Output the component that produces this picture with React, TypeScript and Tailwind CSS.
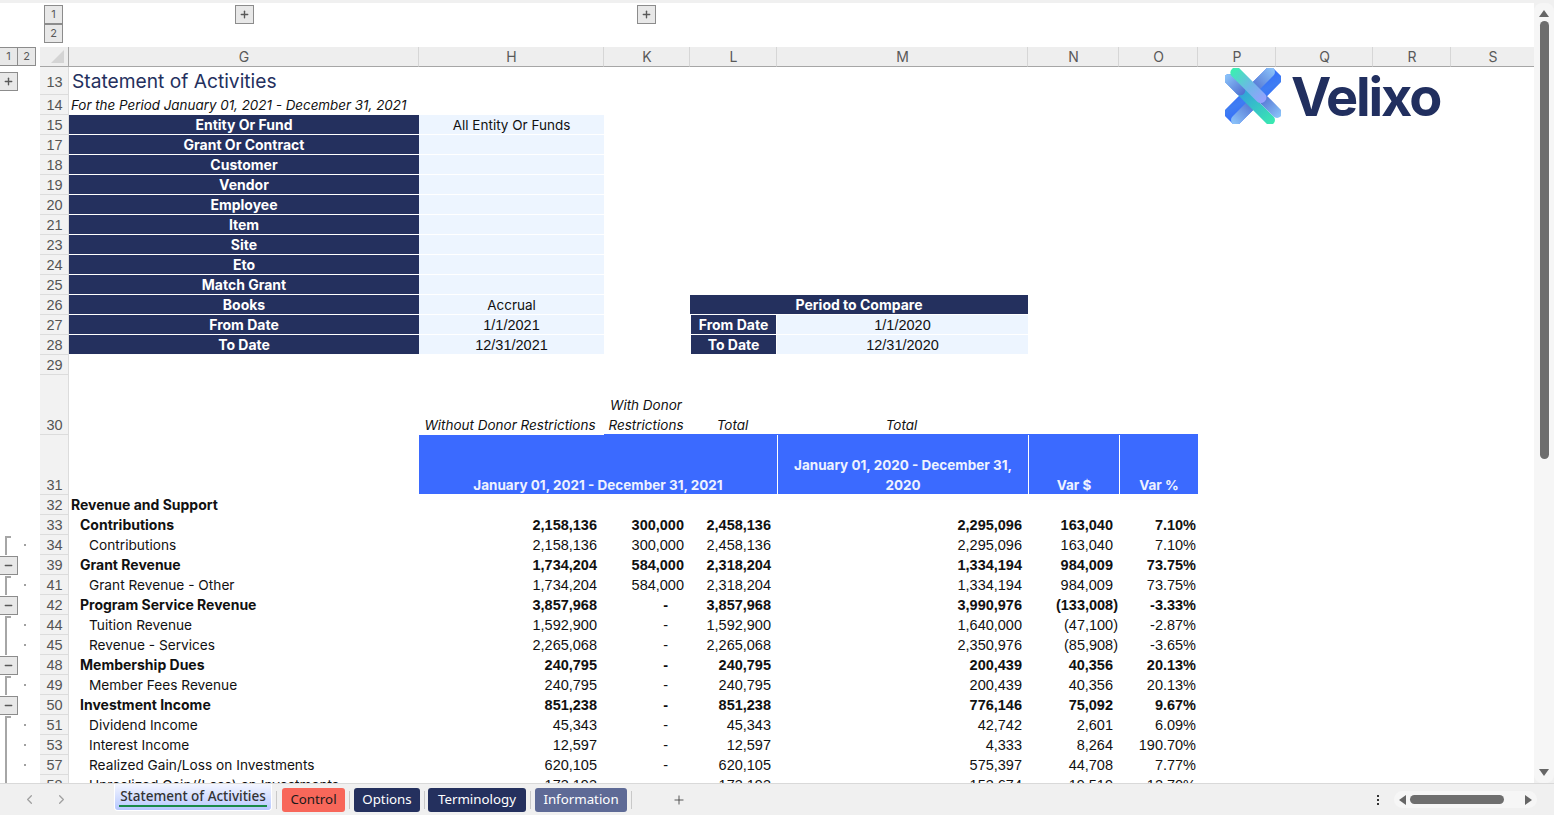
import { ChevronLeft, ChevronRight, Minus, Plus } from 'lucide-react';
import type { ReactNode } from 'react';

const GRID = 'grid grid-cols-[40px_29px_350px_185px_86px_87px_251px_91px_79px_78px_97px_78px_83px]';
const NUMFONT = "font-['Liberation_Sans',sans-serif] text-[14.5px]";

type Gutter = 'plus' | 'minus' | 'hook' | 'line';

function OutlineBtn({ children, className = '' }: { children: ReactNode; className?: string }) {
  return (
    <div className={`flex h-[19px] w-[19px] items-center justify-center border border-[#8c8c8c] bg-[#e8e8e8] text-[11px] text-[#595959] ${className}`}>
      {children}
    </div>
  );
}

function Row({ n, gutter, height = 'h-5', numClass = '', children }: { n: number; gutter?: Gutter; height?: string; numClass?: string; children?: ReactNode }) {
  return (
    <div className={`${GRID} ${height}`}>
      <div className="relative">
        {gutter === 'plus' && <OutlineBtn className="absolute left-[-1px] top-[5px]"><Plus size={11} strokeWidth={3} /></OutlineBtn>}
        {gutter === 'minus' && <OutlineBtn className="absolute left-[-1px] top-px"><Minus size={11} strokeWidth={3} /></OutlineBtn>}
        {gutter === 'hook' && <div className="absolute bottom-0 left-[5px] top-px w-[6px] border-l-2 border-t-2 border-[#a6a6a6]" />}
        {gutter === 'line' && <div className="absolute bottom-0 left-[5px] top-0 w-[2px] bg-[#a6a6a6]" />}
        {(gutter === 'hook' || gutter === 'line') && <div className="absolute left-[24px] top-[9px] h-[2px] w-[2px] bg-[#a0a0a0]" />}
      </div>
      <div className={`flex items-end justify-center bg-[#f2f2f2] leading-[20px] text-[#555555] shadow-[inset_-1px_-1px_0_#dcdcdc] ${NUMFONT} ${numClass}`}>
        {n}
      </div>
      {children}
    </div>
  );
}

function Label({ text, className = '' }: { text: string; className?: string }) {
  return <div className={`flex items-end justify-center border-b border-white bg-[#24305e] text-[14px] font-bold leading-[19px] text-white ${className}`}>{text}</div>;
}

function Value({ text = '', date }: { text?: string; date?: boolean }) {
  return <div className={`flex items-end justify-center bg-[#edf5ff] leading-[20px] text-[#111111] shadow-[inset_0_-1px_0_#ffffff] ${date ? NUMFONT : 'text-[13.5px]'}`}>{text}</div>;
}

const filters: [number, string, string?][] = [
  [15, 'Entity Or Fund', 'All Entity Or Funds'],
  [17, 'Grant Or Contract'],
  [18, 'Customer'],
  [19, 'Vendor'],
  [20, 'Employee'],
  [21, 'Item'],
  [23, 'Site'],
  [24, 'Eto'],
  [25, 'Match Grant'],
];

type DataRow = { n: number; label: string; vals: string[]; level: 1 | 2; gutter?: Gutter };

const data: DataRow[] = [
  { n: 33, label: 'Contributions', level: 1, vals: ['2,158,136', '300,000', '2,458,136', '2,295,096', '163,040', '7.10%'] },
  { n: 34, label: 'Contributions', level: 2, gutter: 'hook', vals: ['2,158,136', '300,000', '2,458,136', '2,295,096', '163,040', '7.10%'] },
  { n: 39, label: 'Grant Revenue', level: 1, gutter: 'minus', vals: ['1,734,204', '584,000', '2,318,204', '1,334,194', '984,009', '73.75%'] },
  { n: 41, label: 'Grant Revenue - Other', level: 2, gutter: 'hook', vals: ['1,734,204', '584,000', '2,318,204', '1,334,194', '984,009', '73.75%'] },
  { n: 42, label: 'Program Service Revenue', level: 1, gutter: 'minus', vals: ['3,857,968', '-', '3,857,968', '3,990,976', '(133,008)', '-3.33%'] },
  { n: 44, label: 'Tuition Revenue', level: 2, gutter: 'hook', vals: ['1,592,900', '-', '1,592,900', '1,640,000', '(47,100)', '-2.87%'] },
  { n: 45, label: 'Revenue - Services', level: 2, gutter: 'line', vals: ['2,265,068', '-', '2,265,068', '2,350,976', '(85,908)', '-3.65%'] },
  { n: 48, label: 'Membership Dues', level: 1, gutter: 'minus', vals: ['240,795', '-', '240,795', '200,439', '40,356', '20.13%'] },
  { n: 49, label: 'Member Fees Revenue', level: 2, gutter: 'hook', vals: ['240,795', '-', '240,795', '200,439', '40,356', '20.13%'] },
  { n: 50, label: 'Investment Income', level: 1, gutter: 'minus', vals: ['851,238', '-', '851,238', '776,146', '75,092', '9.67%'] },
  { n: 51, label: 'Dividend Income', level: 2, gutter: 'hook', vals: ['45,343', '-', '45,343', '42,742', '2,601', '6.09%'] },
  { n: 53, label: 'Interest Income', level: 2, gutter: 'line', vals: ['12,597', '-', '12,597', '4,333', '8,264', '190.70%'] },
  { n: 57, label: 'Realized Gain/Loss on Investments', level: 2, gutter: 'line', vals: ['620,105', '-', '620,105', '575,397', '44,708', '7.77%'] },
  { n: 58, label: 'Unrealized Gain/(Loss) on Investments', level: 2, gutter: 'line', vals: ['173,193', '-', '173,193', '153,674', '19,519', '12.70%'] },
];

function Num({ text, className }: { text: string; className: string }) {
  return <div className={`flex items-end justify-end leading-[20px] ${NUMFONT} ${className}`}>{text}</div>;
}

function DataLine({ row }: { row: DataRow }) {
  const bold = row.level === 1 ? 'font-bold' : '';
  const labelStyle = row.level === 1 ? 'pl-[11px] text-[14px] font-bold' : 'pl-[20px] text-[13.7px]';
  const [h, k, l, m, v, pct] = row.vals;
  return (
    <Row n={row.n} gutter={row.gutter}>
      <div className={`flex items-end whitespace-nowrap leading-[20px] ${labelStyle}`}>{row.label}</div>
      <Num text={h} className={`pr-[7px] ${bold}`} />
      <Num text={k} className={`${k === '-' ? 'pr-[22px]' : 'pr-[6px]'} ${bold}`} />
      <Num text={l} className={`pr-[6px] ${bold}`} />
      <Num text={m} className={`pr-[6px] ${bold}`} />
      <Num text={v} className={`${v.startsWith('(') ? 'pr-px' : 'pr-[6px]'} ${bold}`} />
      <Num text={pct} className={`pr-[2px] ${bold}`} />
    </Row>
  );
}

function Logo() {
  return (
    <div className="absolute left-[1225px] top-[65px] flex items-center gap-[10px]">
      <svg width="56" height="56" viewBox="0 0 56 56">
        <defs>
          <linearGradient id="blueBar" x1="0" y1="1" x2="1" y2="0">
            <stop offset="0" stopColor="#2f66ff" />
            <stop offset="0.5" stopColor="#3f7df2" />
            <stop offset="1" stopColor="#2f66ff" />
          </linearGradient>
          <linearGradient id="lightOut" x1="0" y1="0" x2="1" y2="0">
            <stop offset="0" stopColor="#8cc4fa" />
            <stop offset="1" stopColor="#4f6fd0" />
          </linearGradient>
          <linearGradient id="lightIn" x1="0" y1="0" x2="1" y2="0">
            <stop offset="0" stopColor="#4f6fd0" />
            <stop offset="1" stopColor="#8cc4fa" />
          </linearGradient>
          <linearGradient id="greenPurple" x1="0" y1="0" x2="1" y2="0">
            <stop offset="0" stopColor="#38f2ae" />
            <stop offset="0.55" stopColor="#6fb6e8" />
            <stop offset="1" stopColor="#98a0ff" />
          </linearGradient>
          <linearGradient id="blueGreen" x1="0" y1="0" x2="1" y2="0">
            <stop offset="0" stopColor="#2f7cf0" />
            <stop offset="1" stopColor="#3aeab0" />
          </linearGradient>
        </defs>
        <g transform="rotate(-45 28 28)">
          <rect x="-6" y="18" width="68" height="20" rx="5" fill="url(#blueBar)" />
          <rect x="32" y="18" width="30" height="10" rx="5" fill="url(#lightIn)" />
          <rect x="-6" y="28" width="30" height="10" rx="5" fill="url(#lightOut)" />
        </g>
        <g transform="rotate(45 28 28)">
          <rect x="-6" y="28" width="68" height="10" rx="5" fill="url(#blueGreen)" />
          <rect x="34" y="18" width="28" height="10" rx="5" fill="url(#lightIn)" />
          <rect x="-6" y="28" width="26" height="10" rx="5" fill="url(#lightOut)" />
          <rect x="-6" y="18" width="46" height="11" rx="5" fill="url(#greenPurple)" />
        </g>
      </svg>
      <span className="mt-[2px] text-[54px] font-bold leading-none tracking-[-2.1px] text-[#212f5f]">Velixo</span>
    </div>
  );
}

function Triangle({ dir }: { dir: 'up' | 'down' | 'left' | 'right' }) {
  const points = { up: '0,8 5,1 10,8', down: '0,2 10,2 5,9', left: '8,0 8,10 1,5', right: '2,0 2,10 9,5' }[dir];
  return (
    <svg width="10" height="10" viewBox="0 0 10 10" className="shrink-0">
      <polygon points={points} fill="#666666" />
    </svg>
  );
}

function Tab({ text, className }: { text: string; className: string }) {
  return <div className={`flex h-6 items-center justify-center rounded-[3px] text-[13.3px] ${className}`}>{text}</div>;
}

function Sep() {
  return <div className="h-[18px] w-px bg-[#c9c9c9]" />;
}

const LETTERS = ['G', 'H', 'K', 'L', 'M', 'N', 'O', 'P', 'Q', 'R', 'S'];
const BLUE_HEAD = 'flex items-end justify-center bg-[#3b6aff] text-[13.5px] font-bold leading-[20px] text-[#eef2ff] shadow-[inset_0_-1px_0_#ffffff]';
const ITALIC_HEAD = 'flex items-end justify-center text-center text-[13.5px] italic leading-[20px]';

export default function App() {
  return (
    <div className="flex h-[815px] w-[1554px] flex-col overflow-hidden bg-[#f0f0f0] font-['Inter',sans-serif] text-[#111111]">
      <div className="flex min-h-0 flex-1 pt-[3px]">
        <div className="relative w-[1534px] overflow-hidden bg-white">
          {/* outline levels up top */}
          <div className={`${GRID} h-[44px]`}>
            <div />
            <div className="flex flex-col pl-[4px] pt-[2px]">
              <OutlineBtn>1</OutlineBtn>
              <OutlineBtn>2</OutlineBtn>
            </div>
            <div className="flex justify-center pt-[2px]"><OutlineBtn><Plus size={11} strokeWidth={3} /></OutlineBtn></div>
            <div />
            <div className="flex justify-center pr-px pt-[2px]"><OutlineBtn><Plus size={11} strokeWidth={3} /></OutlineBtn></div>
          </div>

          {/* column letters */}
          <div className={`${GRID} h-5`}>
            <div className="flex">
              <OutlineBtn className="-ml-px">1</OutlineBtn>
              <OutlineBtn className="-ml-px">2</OutlineBtn>
            </div>
            <div className="flex items-end justify-end border-b border-r border-[#a6a6a6] bg-[#eeeeee] pb-[3px] pr-[4px]">
              <svg width="13" height="13" viewBox="0 0 13 13"><polygon points="13,0 13,13 0,13" fill="#d4d4d4" /></svg>
            </div>
            {LETTERS.map((c, i) => (
              <div key={c} className={`flex items-end justify-center border-b border-b-[#a6a6a6] bg-[#eeeeee] pl-px text-[14px] leading-[19px] text-[#595959] ${i === 10 ? '' : 'border-r border-r-[#d6d6d6]'}`}>
                {c}
              </div>
            ))}
          </div>

          <Row n={13} gutter="plus" height="h-7" numClass="pb-[3px]">
            <div className="col-span-2 flex items-end pl-[3px] text-[19.2px] leading-[28px] text-[#24305e]">Statement of Activities</div>
          </Row>
          <Row n={14}>
            <div className="col-span-2 flex items-end pl-[2px] text-[13.4px] italic leading-[20px]">For the Period January 01, 2021 - December 31, 2021</div>
          </Row>

          {filters.map(([n, label, value]) => (
            <Row key={n} n={n}>
              <Label text={label} />
              <Value text={value} />
            </Row>
          ))}
          <Row n={26}>
            <Label text="Books" />
            <Value text="Accrual" />
            <div />
            <Label text="Period to Compare" className="col-span-2" />
          </Row>
          <Row n={27}>
            <Label text="From Date" />
            <Value text="1/1/2021" date />
            <div />
            <Label text="From Date" className="border-x" />
            <Value text="1/1/2020" date />
          </Row>
          <Row n={28}>
            <Label text="To Date" />
            <Value text="12/31/2021" date />
            <div />
            <Label text="To Date" className="border-x" />
            <Value text="12/31/2020" date />
          </Row>
          <Row n={29} />

          <Row n={30} height="h-[60px]">
            <div />
            <div className={`${ITALIC_HEAD} pr-[3px]`}>Without Donor Restrictions</div>
            <div className={`${ITALIC_HEAD} pr-[2px] shadow-[inset_0_-1px_0_#3b6aff]`}>With Donor<br />Restrictions</div>
            <div className={`${ITALIC_HEAD} pr-[2px] shadow-[inset_0_-1px_0_#3b6aff]`}>Total</div>
            <div className={`${ITALIC_HEAD} pr-[2px] shadow-[inset_0_-1px_0_#3b6aff]`}>Total</div>
            <div className="shadow-[inset_0_-1px_0_#3b6aff]" />
            <div className="shadow-[inset_0_-1px_0_#3b6aff]" />
          </Row>
          <Row n={31} height="h-[60px]">
            <div />
            <div className={`${BLUE_HEAD} col-span-3`}>January 01, 2021 - December 31, 2021</div>
            <div className={`${BLUE_HEAD} border-l border-white px-2 text-center`}>January 01, 2020 - December 31, 2020</div>
            <div className={`${BLUE_HEAD} border-l border-white`}>Var $</div>
            <div className={`${BLUE_HEAD} border-l border-white`}>Var %</div>
          </Row>
          <Row n={32}>
            <div className="col-span-2 flex items-end pl-[2px] text-[14px] font-bold leading-[20px]">Revenue and Support</div>
          </Row>
          {data.map((row) => (
            <DataLine key={row.n} row={row} />
          ))}

          <Logo />
        </div>

        {/* vertical scrollbar */}
        <div className="flex w-5 flex-col items-center rounded-[8px] bg-[#f6f6f6] py-[6px]">
          <Triangle dir="up" />
          <div className="mt-[2px] h-[438px] w-[9px] rounded-full bg-[#6e6e6e]" />
          <div className="flex-1" />
          <Triangle dir="down" />
        </div>
      </div>

      {/* sheet tabs */}
      <div className="flex h-8 items-center border-t border-[#d9d9d9]">
        <div className="flex w-[114px] items-center pl-[22px] text-[#a0a0a0]">
          <ChevronLeft size={15} />
          <ChevronRight size={15} className="ml-[17px]" />
        </div>
        <div className="flex h-[27px] w-[158px] flex-col items-center justify-center self-start whitespace-nowrap rounded-b-[4px] border border-t-0 border-white bg-gradient-to-b from-[#f4f6ff] to-[#b6c7ff] font-['Noto_Sans',sans-serif] text-[13.5px] font-medium text-[#333333]">
          <span className="border-b-2 border-[#1a8a4a] px-px leading-[18px]">Statement of Activities</span>
        </div>
        <div className="ml-[4px] flex items-center gap-[4px] font-['Noto_Sans',sans-serif]">
          <Sep />
          <Tab text="Control" className="ml-px w-[63px] bg-[#f8675a] text-[#1a1a1a]" />
          <Sep />
          <Tab text="Options" className="w-[66px] bg-[#24305e] text-white" />
          <Sep />
          <Tab text="Terminology" className="-ml-px w-[98px] bg-[#24305e] text-white" />
          <Sep />
          <Tab text="Information" className="w-[92px] bg-[#5e6a96] text-white" />
          <Sep />
        </div>
        <Plus size={14} strokeWidth={1.5} className="ml-[40px] text-[#444444]" />
        <div className="ml-[691px] flex flex-col gap-[2px]">
          <div className="h-[2px] w-[2px] bg-[#333333]" />
          <div className="h-[2px] w-[2px] bg-[#333333]" />
          <div className="h-[2px] w-[2px] bg-[#333333]" />
        </div>
        <div className="ml-[15px] flex h-[17px] w-[143px] items-center rounded-full bg-[#f6f6f6] px-[4px]">
          <Triangle dir="left" />
          <div className="ml-[2px] h-[9px] w-[94px] rounded-full bg-[#6e6e6e]" />
          <div className="flex-1" />
          <Triangle dir="right" />
        </div>
      </div>
    </div>
  );
}
